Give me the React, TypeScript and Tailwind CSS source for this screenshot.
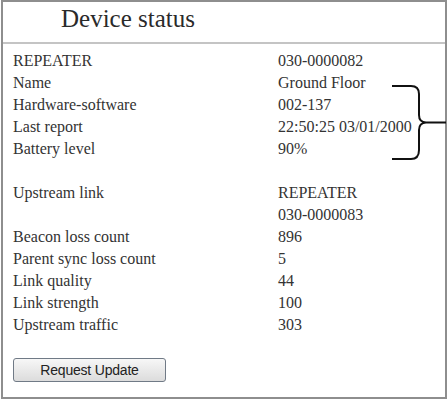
import React from 'react';

const serif = { fontFamily: '"Liberation Serif", "Times New Roman", serif' };

type Row = { label: string; value: string };

const rows: (Row | null)[] = [
  { label: 'REPEATER', value: '030-0000082' },
  { label: 'Name', value: 'Ground Floor' },
  { label: 'Hardware-software', value: '002-137' },
  { label: 'Last report', value: '22:50:25 03/01/2000' },
  { label: 'Battery level', value: '90%' },
  null,
  { label: 'Upstream link', value: 'REPEATER' },
  { label: '', value: '030-0000083' },
  { label: 'Beacon loss count', value: '896' },
  { label: 'Parent sync loss count', value: '5' },
  { label: 'Link quality', value: '44' },
  { label: 'Link strength', value: '100' },
  { label: 'Upstream traffic', value: '303' },
  null,
];

function Brace() {
  return (
    <svg
      className="absolute left-[387px] top-[82px] h-[78px] w-[56px]"
      viewBox="0 0 56 78"
      fill="none"
      stroke="#111"
      strokeWidth={2}
    >
      <path d="M2 2 H21 Q29 2 29 10 V31 Q29 38 36 38.5 H56 M36 38.5 Q29 39 29 46 V66 Q29 75 21 75 H2" />
    </svg>
  );
}

export default function App() {
  return (
    <div className="bg-white">
      <div className="relative ml-px h-[399px] w-[446px] border-2 border-[#8e8e8e] bg-white text-[#333]" style={serif}>
        {/* Title */}
        <div className="h-[42px] border-b-2 border-[#c4c4c4] pl-[58px] pt-[2px] text-[25px] leading-[30px] text-[#2a2a2a]">
          Device status
        </div>

        {/* Status rows */}
        <div className="pl-[10px] pt-[6px] text-[16px] leading-[22px]">
          {rows.map((row, i) =>
            row ? (
              <div key={i} className="flex h-[22px]">
                <span className="w-[265px]">{row.label}</span>
                <span>{row.value}</span>
              </div>
            ) : (
              <div key={i} className="h-[22px]" />
            )
          )}
          <button
            className="h-[24px] w-[153px] rounded-[3px] border border-[#707a86] bg-gradient-to-b from-[#f7f7f7] to-[#dcdcdc] text-[14px] tracking-[-0.2px] text-[#222]"
            style={{ fontFamily: '"Liberation Sans", Arial, sans-serif' }}
          >
            Request Update
          </button>
        </div>

        <Brace />
      </div>
    </div>
  );
}
